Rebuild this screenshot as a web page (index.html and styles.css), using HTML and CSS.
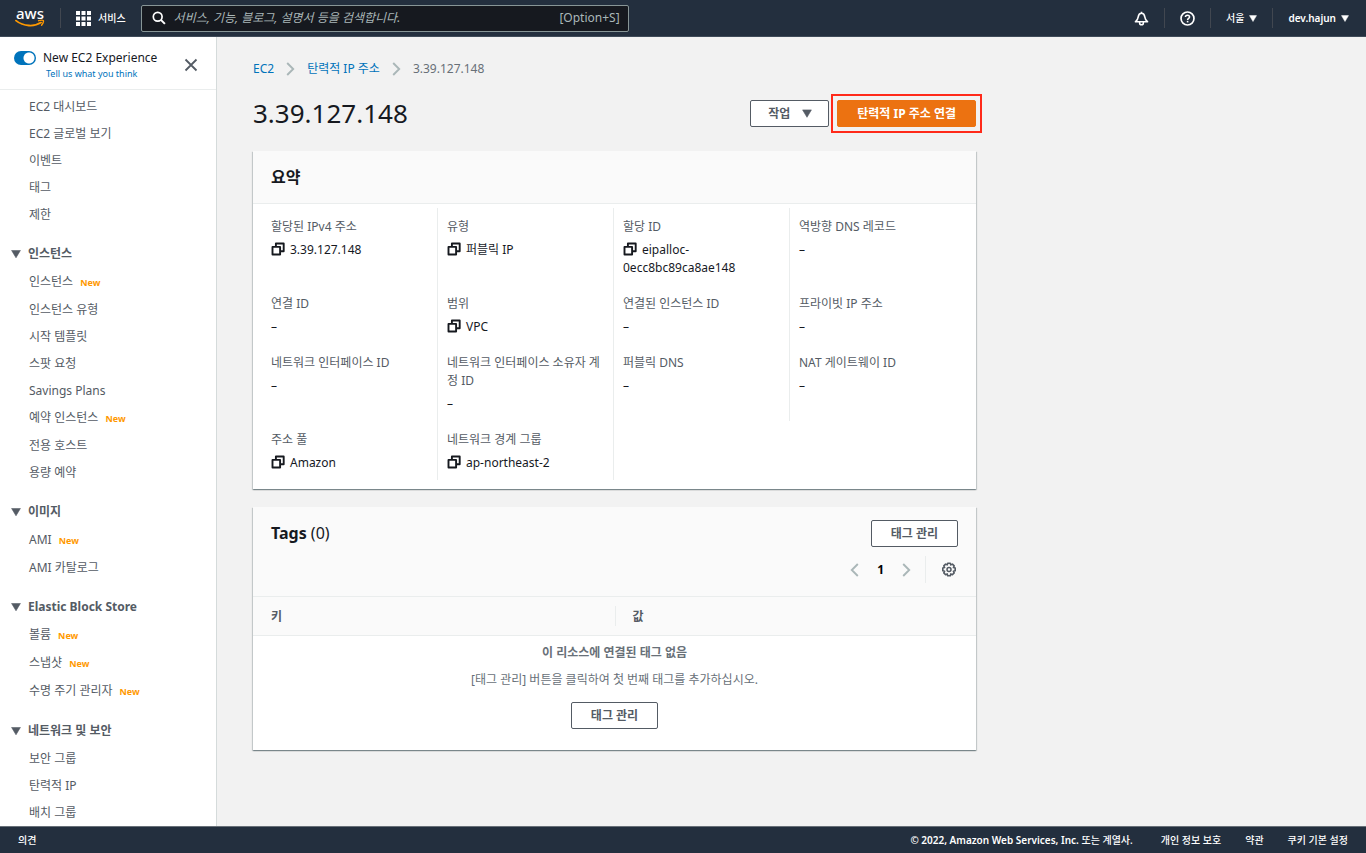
FILE: index.html
```html
<!DOCTYPE html>
<html lang="ko">
<head>
<meta charset="utf-8">
<title>3.39.127.148 | 탄력적 IP 주소</title>
<link rel="stylesheet" href="styles.css">
</head>
<body>
<svg class="defs" aria-hidden="true">
  <symbol id="copy" viewBox="0 0 14 14"><path d="M1.500 4.900h7.600v7.600H1.500zM4.900 4.700V1.500h7.800v7.800H9.400" fill="none" stroke="currentColor" stroke-width="1.900" stroke-linejoin="round"/></symbol>
  <symbol id="caret" viewBox="0 0 10 8"><path d="M.6.4h8.800L5 7.800z" fill="currentColor" stroke="currentColor" stroke-width=".6" stroke-linejoin="round"/></symbol>
  <symbol id="chevron" viewBox="0 0 9 14"><path d="M1.200 1l6 6-6 6" fill="none" stroke="currentColor" stroke-width="1.900"/></symbol>
</svg>

<header class="topbar">
  <a class="logo" href="#" aria-label="aws"><span class="logo-text">aws</span><svg class="logo-smile" viewBox="0 0 30 9"><path d="M1 1.600C8.500 7.600 19.500 8 26 3.600" fill="none" stroke="#f90" stroke-width="1.800" stroke-linecap="round"/><path d="M23.600 1.700c2-.6 4-.8 4.700-.2.500.8-.4 3-1.700 4.700" fill="none" stroke="#f90" stroke-width="1.400" stroke-linecap="round"/></svg></a>
  <button class="services" type="button">
    <svg class="grid-icon" viewBox="0 0 15 15" fill="#fff"><path d="M0 0h4v4H0zM5.500 0h4v4h-4zM11 0h4v4h-4zM0 5.500h4v4H0zM5.500 5.500h4v4h-4zM11 5.500h4v4h-4zM0 11h4v4H0zM5.500 11h4v4h-4zM11 11h4v4h-4z"/></svg>
    서비스
  </button>
  <label class="search">
    <svg class="search-icon" viewBox="0 0 14 14"><circle cx="5.700" cy="5.700" r="4.400" fill="none" stroke="#fff" stroke-width="1.700"/><path d="M8.900 8.900l4 4" stroke="#fff" stroke-width="2"/></svg>
    <input type="search" aria-label="검색" placeholder="서비스, 기능, 블로그, 설명서 등을 검색합니다.">
    <span class="shortcut">[Option+S]</span>
  </label>
  <nav class="account">
    <button type="button" aria-label="알림"><svg class="bell" viewBox="0 0 16 16"><path d="M8 .800v1.600M8 2.400c-2.200 0-3.200 1.600-3.500 3.800-.3 2.400-1.100 3.700-3 5.300h13c-1.900-1.600-2.700-2.900-3-5.300-.3-2.200-1.300-3.800-3.500-3.800z" fill="none" stroke="#fff" stroke-width="1.700" stroke-linejoin="round"/><path d="M6 11.700v1a2 2 0 0 0 4 0v-1" fill="none" stroke="#fff" stroke-width="1.600"/></svg></button>
    <button type="button" aria-label="도움말"><svg class="help" viewBox="0 0 16 16" fill="none" stroke="#fff"><circle cx="8" cy="8" r="6.900" stroke-width="1.800"/><path d="M5.800 6.500c0-1.300.9-2.100 2.200-2.100s2.200.8 2.200 1.900c0 1.500-2.100 1.500-2.100 3.200" stroke-width="1.600"/><path d="M8.100 10.500v1.700" stroke-width="1.700"/></svg></button>
    <button type="button">서울 <svg class="small-caret"><use href="#caret"/></svg></button>
    <button type="button"><span class="user">dev.hajun</span> <svg class="small-caret"><use href="#caret"/></svg></button>
  </nav>
</header>

<div class="shell">
  <aside class="sidebar">
    <div class="experience">
      <input class="toggle" id="experience" type="checkbox" role="switch" checked>
      <div class="experience-text">
        <label for="experience">New EC2 Experience</label>
        <a href="#">Tell us what you think</a>
      </div>
      <button class="close" type="button" aria-label="닫기"><svg viewBox="0 0 14 14"><path d="M1.500 1.500l11 11M12.500 1.500l-11 11" stroke="#545b64" stroke-width="1.800"/></svg></button>
    </div>
    <nav class="menu">
      <ul>
        <li><a href="#">EC2 대시보드</a></li>
        <li><a href="#">EC2 글로벌 보기</a></li>
        <li><a href="#">이벤트</a></li>
        <li><a href="#">태그</a></li>
        <li><a href="#">제한</a></li>
      </ul>
      <section>
        <h3><svg><use href="#caret"/></svg>인스턴스</h3>
        <ul>
          <li class="has-new"><a href="#">인스턴스</a><span class="new">New</span></li>
          <li><a href="#">인스턴스 유형</a></li>
          <li><a href="#">시작 템플릿</a></li>
          <li><a href="#">스팟 요청</a></li>
          <li><a href="#">Savings Plans</a></li>
          <li class="has-new"><a href="#">예약 인스턴스</a><span class="new">New</span></li>
          <li><a href="#">전용 호스트</a></li>
          <li><a href="#">용량 예약</a></li>
        </ul>
      </section>
      <section>
        <h3><svg><use href="#caret"/></svg>이미지</h3>
        <ul>
          <li class="has-new"><a href="#">AMI</a><span class="new">New</span></li>
          <li><a href="#">AMI 카탈로그</a></li>
        </ul>
      </section>
      <section>
        <h3><svg><use href="#caret"/></svg>Elastic Block Store</h3>
        <ul>
          <li class="has-new"><a href="#">볼륨</a><span class="new">New</span></li>
          <li class="has-new"><a href="#">스냅샷</a><span class="new">New</span></li>
          <li class="has-new"><a href="#">수명 주기 관리자</a><span class="new">New</span></li>
        </ul>
      </section>
      <section>
        <h3><svg><use href="#caret"/></svg>네트워크 및 보안</h3>
        <ul>
          <li><a href="#">보안 그룹</a></li>
          <li><a href="#">탄력적 IP</a></li>
          <li><a href="#">배치 그룹</a></li>
        </ul>
      </section>
    </nav>
  </aside>

  <main class="main">
    <div class="content">
      <nav class="breadcrumb">
        <a href="#">EC2</a><svg><use href="#chevron"/></svg><a href="#">탄력적 IP 주소</a><svg><use href="#chevron"/></svg><span>3.39.127.148</span>
      </nav>
      <div class="title-row">
        <h1>3.39.127.148</h1>
        <button class="btn btn-menu" type="button">작업 <svg><use href="#caret"/></svg></button>
        <div class="highlight"><button class="btn btn-primary" type="button">탄력적 IP 주소 연결</button></div>
      </div>

      <section class="card">
        <div class="card-head"><h2>요약</h2></div>
        <dl class="summary">
          <div><dt>할당된 IPv4 주소</dt><dd><svg><use href="#copy"/></svg>3.39.127.148</dd></div>
          <div><dt>유형</dt><dd><svg><use href="#copy"/></svg>퍼블릭 IP</dd></div>
          <div><dt>할당 ID</dt><dd><svg><use href="#copy"/></svg>eipalloc-0ecc8bc89ca8ae148</dd></div>
          <div><dt>역방향 DNS 레코드</dt><dd>–</dd></div>
          <div><dt>연결 ID</dt><dd>–</dd></div>
          <div><dt>범위</dt><dd><svg><use href="#copy"/></svg>VPC</dd></div>
          <div><dt>연결된 인스턴스 ID</dt><dd>–</dd></div>
          <div><dt>프라이빗 IP 주소</dt><dd>–</dd></div>
          <div><dt>네트워크 인터페이스 ID</dt><dd>–</dd></div>
          <div><dt>네트워크 인터페이스 소유자 계정 ID</dt><dd>–</dd></div>
          <div><dt>퍼블릭 DNS</dt><dd>–</dd></div>
          <div><dt>NAT 게이트웨이 ID</dt><dd>–</dd></div>
          <div><dt>주소 풀</dt><dd><svg><use href="#copy"/></svg>Amazon</dd></div>
          <div><dt>네트워크 경계 그룹</dt><dd><svg><use href="#copy"/></svg>ap-northeast-2</dd></div>
          <div class="blank"></div>
        </dl>
      </section>

      <section class="card">
        <div class="tags-head">
          <div class="tags-title">
            <h2>Tags <span>(0)</span></h2>
            <button class="btn" type="button">태그 관리</button>
          </div>
          <div class="pager">
            <button type="button" aria-label="이전"><svg class="arrow prev"><use href="#chevron"/></svg></button>
            <button class="page" type="button">1</button>
            <button type="button" aria-label="다음"><svg class="arrow"><use href="#chevron"/></svg></button>
            <button class="settings" type="button" aria-label="기본 설정"><svg viewBox="0 0 16 16" fill="none" stroke="#545b64"><path d="M6.700 1.200h2.600l.5 1.700 1.600-.8 1.800 1.800-.8 1.600 1.800.6v2.600l-1.800.6.8 1.600-1.800 1.800-1.600-.8-.5 1.800H6.700l-.5-1.800-1.600.8-1.800-1.800.8-1.600-1.800-.6V6.100l1.800-.6-.8-1.600 1.800-1.800 1.600.8z" stroke-width="1.600" stroke-linejoin="round"/><circle cx="8" cy="7.500" r="2" stroke-width="1.500"/></svg></button>
          </div>
        </div>
        <table class="tags">
          <thead><tr><th scope="col">키</th><th scope="col">값</th></tr></thead>
          <tbody><tr><td colspan="2">
            <strong>이 리소스에 연결된 태그 없음</strong>
            <p>[태그 관리] 버튼을 클릭하여 첫 번째 태그를 추가하십시오.</p>
            <button class="btn" type="button">태그 관리</button>
          </td></tr></tbody>
        </table>
      </section>
    </div>
  </main>
</div>

<footer class="footer">
  <a href="#">의견</a>
  <span class="copyright"><span class="owner">© 2022, Amazon Web Services, Inc.</span> 또는 계열사.</span>
  <a href="#">개인 정보 보호</a>
  <a href="#">약관</a>
  <a href="#">쿠키 기본 설정</a>
</footer>
</body>
</html>
```
FILE: styles.css
```css
* { box-sizing: border-box; }

body {
  margin: 0;
  height: 100vh;
  display: flex;
  flex-direction: column;
  overflow: hidden;
  background: #f2f2f2;
  color: #16191f;
  font: 12px/18px "Noto Sans", "Noto Sans CJK KR", sans-serif;
}

h1, h2, h3, p, ul, dl, dd { margin: 0; padding: 0; }
ul { list-style: none; }
a { color: inherit; text-decoration: none; }
button { font: inherit; color: inherit; background: none; border: 0; padding: 0; cursor: pointer; }
svg { display: block; flex: none; }
.defs { position: absolute; width: 0; height: 0; }

/* Top bar */
.topbar {
  flex: none;
  display: flex;
  align-items: center;
  height: 37px;
  background: #232f3e;
  border-bottom: 1px solid #3f4b59;
  color: #fff;
  font-size: 10px;
  font-weight: 500;
}
.user, .owner { font-weight: 600; }
.logo { display: flex; flex-direction: column; align-items: center; width: 60px; }
.logo-text { font-size: 15px; line-height: 16px; font-weight: 500; height: 14px; margin-top: -4px; }
.logo-smile { width: 30px; height: 9px; }
.services {
  display: flex;
  align-items: center;
  gap: 7px;
  height: 20px;
  padding: 0 15px;
  border-left: 1px solid #414750;
}
.grid-icon { width: 15px; height: 15px; }
.search {
  display: flex;
  align-items: center;
  gap: 8px;
  width: 488px;
  height: 27px;
  padding: 0 8px 0 10px;
  background: #16191f;
  border: 1px solid #879596;
  border-radius: 2px;
}
.search-icon { width: 14px; height: 14px; }
.search input {
  flex: 1;
  min-width: 0;
  padding: 0;
  border: 0;
  outline: 0;
  background: none;
  color: #fff;
  font: italic 12px/18px "Noto Sans", "Noto Sans CJK KR", sans-serif;
}
.search input::placeholder { color: #aab7b8; opacity: 1; }
.shortcut { color: #aab7b8; font-size: 12px; font-weight: 400; }
.account { display: flex; align-items: center; margin-left: auto; padding-right: 2px; }
.account button {
  display: flex;
  align-items: center;
  gap: 5px;
  height: 20px;
  padding: 0 15px;
  border-left: 1px solid #414750;
}
.account button:first-child { border-left: 0; }
.bell, .help { width: 15px; height: 15px; }
.small-caret { width: 8px; height: 7px; }

/* Page frame */
.shell { flex: 1; min-height: 0; display: flex; }
.sidebar {
  flex: none;
  width: 217px;
  overflow: hidden;
  background: #fff;
  border-right: 1px solid #d5dbdb;
  color: #545b64;
}
.experience {
  display: flex;
  align-items: flex-start;
  gap: 7px;
  height: 53px;
  padding: 12px 17px 0 14px;
  border-bottom: 1px solid #eaeded;
}
.toggle {
  appearance: none;
  width: 22px;
  height: 14px;
  margin: 2px 0 0;
  border-radius: 7px;
  background: radial-gradient(circle at 15px 7px, #fff 5px, #0073bb 6px);
}
.experience-text { flex: 1; display: flex; flex-direction: column; }
.experience-text label { color: #16191f; line-height: 18px; }
.experience-text a { margin-left: 3px; color: #0073bb; font-size: 9px; line-height: 13px; }
.close { padding: 9px 1px; }
.close svg { width: 14px; height: 14px; }

.menu { padding-top: 3px; }
.menu section { margin-top: 12px; }
.menu li, .menu h3 { display: flex; align-items: center; }
.menu li { height: 27px; padding-left: 29px; }
.menu .has-new { height: 28px; }
.menu h3 { gap: 7px; height: 28px; padding-left: 11px; font-size: 12px; font-weight: 700; }
.menu h3 svg { width: 10px; height: 8px; }
.new { margin: 1px 0 0 7px; color: #ff9900; font-size: 9px; line-height: 12px; font-weight: 700; }

.main { flex: 1; min-width: 0; overflow: hidden; padding: 23px 36px; }
.content { max-width: 723px; }
.breadcrumb { display: flex; align-items: center; gap: 12px; color: #687078; }
.breadcrumb a { color: #0073bb; }
.breadcrumb svg { width: 9px; height: 14px; color: #aab7b8; }

.title-row { display: flex; align-items: center; margin: 16px 0 18px; height: 39px; }
h1 { margin-right: auto; padding-bottom: 2px; font-size: 26px; line-height: 36px; font-weight: 400; }

.btn {
  display: inline-flex;
  align-items: center;
  justify-content: center;
  height: 27px;
  padding: 0 19px;
  border: 1px solid #545b64;
  border-radius: 2px;
  background: #fff;
  color: #545b64;
  font-weight: 700;
}
.btn-menu { gap: 12px; padding: 0 16px 0 17px; }
.btn-menu svg { width: 10px; height: 9px; }
.btn-primary { background: #ec7211; border-color: #ec7211; color: #fff; }
.highlight { position: relative; margin-left: 8px; display: flex; }
.highlight::after {
  content: "";
  position: absolute;
  inset: -6px;
  border: 2px solid #ff2a1a;
  pointer-events: none;
}

/* Cards */
.card {
  margin-bottom: 18px;
  background: #fff;
  box-shadow: 0 1px 1px 0 rgba(0, 28, 36, .3), 1px 1px 1px 0 rgba(0, 28, 36, .15), -1px 1px 1px 0 rgba(0, 28, 36, .15);
}
.card-head { padding: 13px 18px 12px; background: #fafafa; border-bottom: 1px solid #eaeded; }
h2 { font-size: 16px; line-height: 27px; font-weight: 700; }
h2 span { font-weight: 400; }

.summary { display: grid; grid-template-columns: repeat(4, 1fr); padding: 4px 11px 9px 8px; }
.summary > div { padding: 10px 9px 8px; border-left: 1px solid #eaeded; }
.summary > div:nth-child(4n + 1) { border-left-color: transparent; }
.summary dt { margin-bottom: 5px; color: #545b64; }
.summary svg { display: inline-block; width: 14px; height: 14px; margin-right: 5px; vertical-align: -2px; }

.tags-head { padding: 13px 18px; background: #fafafa; border-bottom: 1px solid #eaeded; }
.tags-title { display: flex; align-items: center; justify-content: space-between; margin-bottom: 9px; }
.pager { display: flex; align-items: center; justify-content: flex-end; gap: 18px; height: 27px; }
.pager .page { font-weight: 700; color: #000; }
.arrow { width: 9px; height: 14px; color: #aab7b8; }
.prev { transform: rotate(180deg); }
.settings { display: flex; align-items: center; height: 27px; margin-left: -4px; padding: 0 1px 0 15px; border-left: 1px solid #eaeded; }
.settings svg { width: 16px; height: 16px; }

.tags { width: 100%; border-collapse: collapse; table-layout: fixed; }
.tags th {
  padding: 11px 18px 9px;
  text-align: left;
  color: #545b64;
  background: #fafafa;
  border-bottom: 1px solid #eaeded;
}
.tags th + th { background: linear-gradient(#eaeded, #eaeded) 0 50% / 1px 20px no-repeat #fafafa; }
.tags td { padding: 8px 18px 21px; text-align: center; color: #687078; }
.tags strong { display: block; margin-bottom: 9px; }
.tags p { margin-bottom: 13px; }

/* Footer */
.footer {
  flex: none;
  display: flex;
  align-items: center;
  gap: 24px;
  height: 27px;
  padding: 0 18px;
  background: #232f3e;
  border-top: 1px solid #687078;
  color: #fff;
  font-size: 10px;
  font-weight: 500;
}
.copyright { margin: 0 4px 0 auto; }
```
